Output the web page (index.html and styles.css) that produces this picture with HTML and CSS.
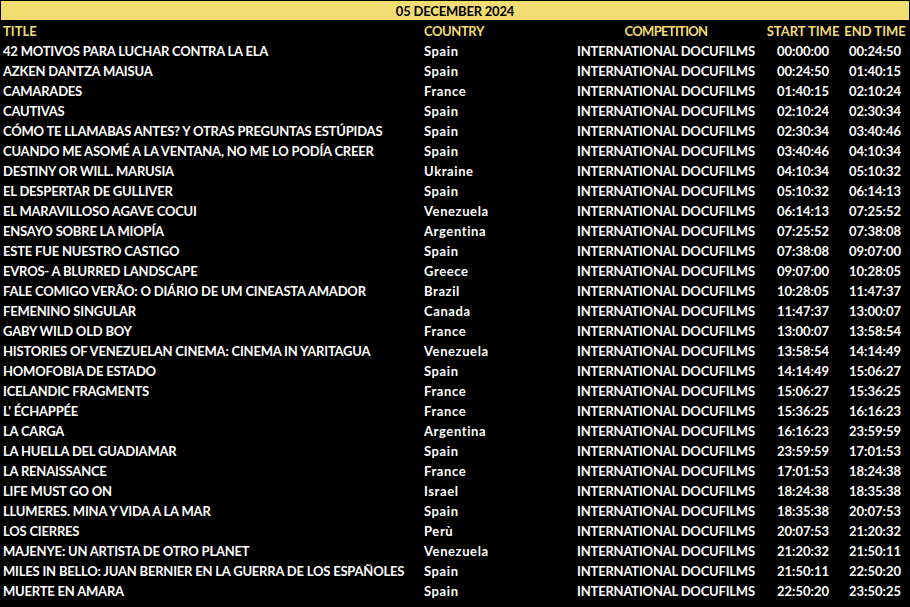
FILE: index.html
```html
<!DOCTYPE html>
<html>
<head>
<meta charset="utf-8">
<link rel="stylesheet" href="styles.css">
</head>
<body>
<div class="banner">05 DECEMBER 2024</div>
<div class="table">
  <div class="row head">
    <div class="c-title">TITLE</div><div class="c-country">COUNTRY</div><div class="c-comp">COMPETITION</div><div class="c-start">START TIME</div><div class="c-end">END TIME</div>
  </div>
  <div class="row"><div class="c-title">42 MOTIVOS PARA LUCHAR CONTRA LA ELA</div><div class="c-country">Spain</div><div class="c-comp">INTERNATIONAL DOCUFILMS</div><div class="c-start">00:00:00</div><div class="c-end">00:24:50</div></div>
  <div class="row"><div class="c-title">AZKEN DANTZA MAISUA</div><div class="c-country">Spain</div><div class="c-comp">INTERNATIONAL DOCUFILMS</div><div class="c-start">00:24:50</div><div class="c-end">01:40:15</div></div>
  <div class="row"><div class="c-title">CAMARADES</div><div class="c-country">France</div><div class="c-comp">INTERNATIONAL DOCUFILMS</div><div class="c-start">01:40:15</div><div class="c-end">02:10:24</div></div>
  <div class="row"><div class="c-title">CAUTIVAS</div><div class="c-country">Spain</div><div class="c-comp">INTERNATIONAL DOCUFILMS</div><div class="c-start">02:10:24</div><div class="c-end">02:30:34</div></div>
  <div class="row"><div class="c-title">CÓMO TE LLAMABAS ANTES? Y OTRAS PREGUNTAS ESTÚPIDAS</div><div class="c-country">Spain</div><div class="c-comp">INTERNATIONAL DOCUFILMS</div><div class="c-start">02:30:34</div><div class="c-end">03:40:46</div></div>
  <div class="row"><div class="c-title">CUANDO ME ASOMÉ A LA VENTANA, NO ME LO PODÍA CREER</div><div class="c-country">Spain</div><div class="c-comp">INTERNATIONAL DOCUFILMS</div><div class="c-start">03:40:46</div><div class="c-end">04:10:34</div></div>
  <div class="row"><div class="c-title">DESTINY OR WILL. MARUSIA</div><div class="c-country">Ukraine</div><div class="c-comp">INTERNATIONAL DOCUFILMS</div><div class="c-start">04:10:34</div><div class="c-end">05:10:32</div></div>
  <div class="row"><div class="c-title">EL DESPERTAR DE GULLIVER</div><div class="c-country">Spain</div><div class="c-comp">INTERNATIONAL DOCUFILMS</div><div class="c-start">05:10:32</div><div class="c-end">06:14:13</div></div>
  <div class="row"><div class="c-title">EL MARAVILLOSO AGAVE COCUI</div><div class="c-country">Venezuela</div><div class="c-comp">INTERNATIONAL DOCUFILMS</div><div class="c-start">06:14:13</div><div class="c-end">07:25:52</div></div>
  <div class="row"><div class="c-title">ENSAYO SOBRE LA MIOPÍA</div><div class="c-country">Argentina</div><div class="c-comp">INTERNATIONAL DOCUFILMS</div><div class="c-start">07:25:52</div><div class="c-end">07:38:08</div></div>
  <div class="row"><div class="c-title">ESTE FUE NUESTRO CASTIGO</div><div class="c-country">Spain</div><div class="c-comp">INTERNATIONAL DOCUFILMS</div><div class="c-start">07:38:08</div><div class="c-end">09:07:00</div></div>
  <div class="row"><div class="c-title">EVROS- A BLURRED LANDSCAPE</div><div class="c-country">Greece</div><div class="c-comp">INTERNATIONAL DOCUFILMS</div><div class="c-start">09:07:00</div><div class="c-end">10:28:05</div></div>
  <div class="row"><div class="c-title">FALE COMIGO VERÃO: O DIÁRIO DE UM CINEASTA AMADOR</div><div class="c-country">Brazil</div><div class="c-comp">INTERNATIONAL DOCUFILMS</div><div class="c-start">10:28:05</div><div class="c-end">11:47:37</div></div>
  <div class="row"><div class="c-title">FEMENINO SINGULAR</div><div class="c-country">Canada</div><div class="c-comp">INTERNATIONAL DOCUFILMS</div><div class="c-start">11:47:37</div><div class="c-end">13:00:07</div></div>
  <div class="row"><div class="c-title">GABY WILD OLD BOY</div><div class="c-country">France</div><div class="c-comp">INTERNATIONAL DOCUFILMS</div><div class="c-start">13:00:07</div><div class="c-end">13:58:54</div></div>
  <div class="row"><div class="c-title">HISTORIES OF VENEZUELAN CINEMA: CINEMA IN YARITAGUA</div><div class="c-country">Venezuela</div><div class="c-comp">INTERNATIONAL DOCUFILMS</div><div class="c-start">13:58:54</div><div class="c-end">14:14:49</div></div>
  <div class="row"><div class="c-title">HOMOFOBIA DE ESTADO</div><div class="c-country">Spain</div><div class="c-comp">INTERNATIONAL DOCUFILMS</div><div class="c-start">14:14:49</div><div class="c-end">15:06:27</div></div>
  <div class="row"><div class="c-title">ICELANDIC FRAGMENTS</div><div class="c-country">France</div><div class="c-comp">INTERNATIONAL DOCUFILMS</div><div class="c-start">15:06:27</div><div class="c-end">15:36:25</div></div>
  <div class="row"><div class="c-title">L' ÉCHAPPÉE</div><div class="c-country">France</div><div class="c-comp">INTERNATIONAL DOCUFILMS</div><div class="c-start">15:36:25</div><div class="c-end">16:16:23</div></div>
  <div class="row"><div class="c-title">LA CARGA</div><div class="c-country">Argentina</div><div class="c-comp">INTERNATIONAL DOCUFILMS</div><div class="c-start">16:16:23</div><div class="c-end">23:59:59</div></div>
  <div class="row"><div class="c-title">LA HUELLA DEL GUADIAMAR</div><div class="c-country">Spain</div><div class="c-comp">INTERNATIONAL DOCUFILMS</div><div class="c-start">23:59:59</div><div class="c-end">17:01:53</div></div>
  <div class="row"><div class="c-title">LA RENAISSANCE</div><div class="c-country">France</div><div class="c-comp">INTERNATIONAL DOCUFILMS</div><div class="c-start">17:01:53</div><div class="c-end">18:24:38</div></div>
  <div class="row"><div class="c-title">LIFE MUST GO ON</div><div class="c-country">Israel</div><div class="c-comp">INTERNATIONAL DOCUFILMS</div><div class="c-start">18:24:38</div><div class="c-end">18:35:38</div></div>
  <div class="row"><div class="c-title">LLUMERES. MINA Y VIDA A LA MAR</div><div class="c-country">Spain</div><div class="c-comp">INTERNATIONAL DOCUFILMS</div><div class="c-start">18:35:38</div><div class="c-end">20:07:53</div></div>
  <div class="row"><div class="c-title">LOS CIERRES</div><div class="c-country">Perù</div><div class="c-comp">INTERNATIONAL DOCUFILMS</div><div class="c-start">20:07:53</div><div class="c-end">21:20:32</div></div>
  <div class="row"><div class="c-title">MAJENYE: UN ARTISTA DE OTRO PLANET</div><div class="c-country">Venezuela</div><div class="c-comp">INTERNATIONAL DOCUFILMS</div><div class="c-start">21:20:32</div><div class="c-end">21:50:11</div></div>
  <div class="row"><div class="c-title">MILES IN BELLO: JUAN BERNIER EN LA GUERRA DE LOS ESPAÑOLES</div><div class="c-country">Spain</div><div class="c-comp">INTERNATIONAL DOCUFILMS</div><div class="c-start">21:50:11</div><div class="c-end">22:50:20</div></div>
  <div class="row"><div class="c-title">MUERTE EN AMARA</div><div class="c-country">Spain</div><div class="c-comp">INTERNATIONAL DOCUFILMS</div><div class="c-start">22:50:20</div><div class="c-end">23:50:25</div></div>
</div>
</body>
</html>
```
FILE: styles.css
```css
html, body {
  margin: 0;
  padding: 0;
  background: #000;
}
body {
  font-family: "Lato", "Liberation Sans", sans-serif;
  font-weight: 700;
  font-size: 13px;
  color: #fff;
  width: 910px;
  height: 607px;
  overflow: hidden;
}
.banner {
  margin: 1px 1px 1px 1px;
  height: 17px;
  padding-top: 2px;
  line-height: 17px;
  background: #f2dd72;
  color: #000;
  text-align: center;
  letter-spacing: -0.2px;
}
.table {
  display: flex;
  flex-direction: column;
}
.row {
  display: grid;
  grid-template-columns: 421px 143px 198px 76px 68px;
  padding-left: 3px;
  height: 20px;
  line-height: 20px;
  white-space: nowrap;
}
.c-title, .c-comp {
  letter-spacing: -0.2px;
}
.c-country {
  letter-spacing: 0.6px;
}
.c-comp, .c-start, .c-end {
  text-align: center;
}
.head {
  color: #f2dd72;
}
.head .c-title {
  letter-spacing: 0;
}
.head .c-country {
  letter-spacing: -0.4px;
}
.head .c-comp {
  letter-spacing: -0.7px;
}
```
